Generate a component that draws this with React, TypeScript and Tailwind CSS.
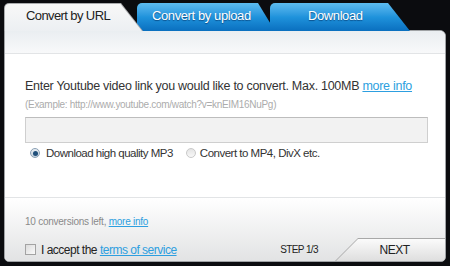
import React from 'react';

const font = { fontFamily: '"Liberation Sans", Arial, sans-serif' };

function Radio({ checked }: { checked?: boolean }) {
  if (checked) {
    return (
      <span className="flex h-[10px] w-[10px] items-center justify-center rounded-full border border-[#8aa0b4] bg-gradient-to-b from-[#e8eef3] to-[#c4d0db]">
        <span className="h-[5px] w-[5px] rounded-full bg-[#1f4f7a]" />
      </span>
    );
  }
  return <span className="block h-[10px] w-[10px] rounded-full border border-[#c9c9c9] bg-gradient-to-b from-[#e4e4e4] to-[#f8f8f8]" />;
}

export default function App() {
  return (
    <div className="h-[266px] w-[450px] overflow-hidden bg-[#0b0c0f] text-[#333]" style={font}>
      {/* tabs */}
      <div className="relative z-10 -mb-px flex h-[31px] pl-[4px] pt-[3px]">
        <div className="relative z-20 h-[28px] w-[139px] rounded-tl-[5px] bg-[#a9abad] [clip-path:polygon(0_0,117px_0,139px_100%,0_100%)]">
          <div className="absolute bottom-0 left-px right-px top-px rounded-tl-[4px] bg-gradient-to-b from-[#f8f8f8] to-[#eceff2] pl-[21px] pt-[4px] text-[13px] leading-[16px] tracking-[-0.6px] text-[#222] [clip-path:polygon(0_0,115.5px_0,100%_100%,0_100%)]">
            Convert by URL
          </div>
        </div>
        <div className="relative z-10 -ml-[6px] h-[28px] w-[138px] rounded-t-[5px] bg-gradient-to-b from-[#5cbcf0] via-[#1f93dc] to-[#0a6fbf] pl-[15px] pt-[5px] text-[13px] leading-[16px] tracking-[-0.4px] text-white [clip-path:polygon(0_0,121px_0,100%_100%,0_100%)] [text-shadow:0_1px_1px_rgba(0,40,90,0.6)]">
          Convert by upload
        </div>
        <div className="relative z-10 -ml-[5px] h-[28px] w-[140px] rounded-t-[5px] bg-gradient-to-b from-[#5cbcf0] via-[#1f93dc] to-[#0a6fbf] pl-[38px] pt-[5px] text-[13px] leading-[16px] tracking-[-0.4px] text-white [clip-path:polygon(0_0,118px_0,100%_100%,0_100%)] [text-shadow:0_1px_1px_rgba(0,40,90,0.6)]">
          Download
        </div>
      </div>

      {/* panel */}
      <div className="ml-[4px] flex h-[232px] w-[442px] flex-col overflow-hidden rounded-tr-[6px] rounded-b-[5px] border border-[#9fa2a5] bg-white">
        <div className="h-[22px] bg-gradient-to-b from-[#eaeef1] to-[#f8f9fa]" />

        <div className="h-[145px] border-y border-[#e2e4e6] bg-white px-[20px] pt-[24px]">
          <p className="whitespace-nowrap text-[12.5px] leading-[16px] tracking-[-0.28px]">
            Enter Youtube video link you would like to convert. Max. 100MB{' '}
            <a href="#" className="text-[#2d9fe0] underline">more info</a>
          </p>
          <p className="mt-[4px] text-[10px] leading-[14px] tracking-[-0.3px] text-[#acacac]">
            (Example: http://www.youtube.com/watch?v=knEIM16NuPg)
          </p>
          <div className="mt-[5px] h-[26px] w-[403px] border border-[#cfcfcf] border-t-[#bdbdbd] bg-[#f2f2f2]" />
          <div className="mt-[3px] flex items-center text-[11.5px] leading-[14px] tracking-[-0.5px]">
            <span className="ml-[5px]"><Radio checked /></span>
            <span className="ml-[6px]">Download high quality MP3</span>
            <span className="ml-[13px]"><Radio /></span>
            <span className="ml-[4px]">Convert to MP4, DivX etc.</span>
          </div>
        </div>

        <div className="flex flex-1 flex-col bg-gradient-to-b from-white to-[#e2e3e4] pt-[17px]">
          <p className="px-[20px] text-[10px] leading-[14px] tracking-[-0.25px] text-[#8a8a8a]">
            10 conversions left, <a href="#" className="text-[#2d9fe0] underline">more info</a>
          </p>
          <div className="mt-auto flex h-[23px] items-center">
            <span className="ml-[20px] h-[11px] w-[11px] border border-[#a3a3a3] bg-gradient-to-br from-[#dcdcdc] to-[#fafafa]" />
            <span className="ml-[5px] text-[12px] leading-[14px] tracking-[-0.5px] text-[#222]">
              I accept the <a href="#" className="text-[#2d9fe0] underline">terms of service</a>
            </span>
            <span className="ml-auto mr-[17px] text-[10px] leading-[14px] tracking-[-0.6px] text-[#222]">STEP 1/3</span>
            <div className="relative h-[23px] w-[110px] bg-[#a8a8a8] [clip-path:polygon(23px_0,100%_0,100%_100%,0_100%)]">
              <div className="absolute bottom-0 left-px right-0 top-px flex items-center justify-center bg-gradient-to-b from-[#fbfbfb] to-[#dedede] pl-[24px] pr-[16px] text-[12px] tracking-[-0.5px] text-[#222] [clip-path:polygon(22px_0,100%_0,100%_100%,0_100%)]">
                NEXT
              </div>
            </div>
          </div>
        </div>
      </div>
    </div>
  );
}
